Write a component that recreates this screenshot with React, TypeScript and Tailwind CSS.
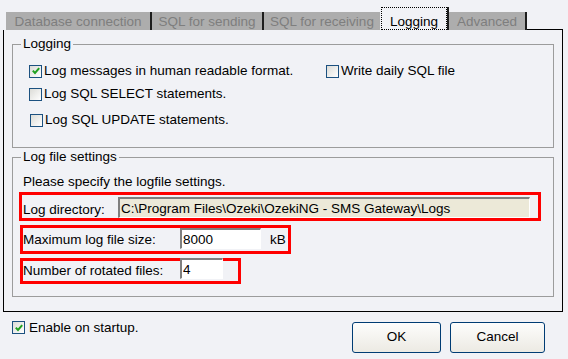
import React from "react";

function Check({ checked }: { checked?: boolean }) {
  return (
    <span className="flex h-[13px] w-[13px] shrink-0 items-center justify-center border border-[#1c5180] bg-linear-to-br from-[#dcdcd7] to-white">
      {checked && (
        <svg width="8" height="8" viewBox="0 0 8 8">
          <path d="M0.8 3.6 L3 6 L7.2 1.2" stroke="#21a121" strokeWidth="2" fill="none" />
        </svg>
      )}
    </span>
  );
}

function Tab({ label, width, edge = true }: { label: string; width: string; edge?: boolean }) {
  return (
    <div
      className={`flex h-[18px] ${width} justify-center bg-[#adadad] pt-[2px] leading-[16px] text-[#7e7e7e] ${
        edge ? "border-r-2 border-[#1e1e1e]" : ""
      }`}
    >
      {label}
    </div>
  );
}

const fieldCls =
  "border-t-2 border-l-2 border-r border-b border-t-[#7f7f7f] border-l-[#7f7f7f] border-r-white border-b-white pl-[1px] text-[13.5px] text-black outline-none";

export default function App() {
  return (
    <div className="h-[359px] w-[568px] overflow-hidden bg-[#f1f2f6] pt-[7px] font-['Liberation_Sans',Arial,sans-serif] text-[13.5px] text-black">
      {/* tabs */}
      <div className="ml-[3px] flex h-[23px] w-[560px] items-end pl-[3px]">
        <Tab label="Database connection" width="w-[146px]" />
        <Tab label="SQL for sending" width="w-[112px]" />
        <Tab label="SQL for receiving" width="w-[116px]" edge={false} />
        <div className="ml-[1px] h-[23px] w-[68px] border-r-2 border-[#1e1e1e]">
          <div className="flex h-full justify-center border border-dotted border-black pt-[6px] leading-[16px]">
            Logging
          </div>
        </div>
        <Tab label="Advanced" width="w-[78px]" />
        <div className="flex-1 self-stretch border-b border-black" />
      </div>

      {/* panel */}
      <div className="ml-[3px] w-[560px] border-x border-b border-black px-[8px] pt-[6px] pb-[14px]">
        <fieldset className="border border-[#9c9c9c] pb-[19px]">
          <legend className="ml-[8px] px-[2px] leading-[16px]">Logging</legend>
          <div className="mt-[11px] flex h-[16px] items-center pl-[16px]">
            <label className="flex w-[297px] items-center gap-[2px]">
              <Check checked />
              Log messages in human readable format.
            </label>
            <label className="flex items-center gap-[2px]">
              <Check />
              Write daily SQL file
            </label>
          </div>
          <div className="mt-[7px] flex h-[16px] items-center gap-[2px] pl-[16px]">
            <Check />
            Log SQL SELECT statements.
          </div>
          <div className="mt-[10px] flex h-[16px] items-center gap-[2px] pl-[17px]">
            <Check />
            Log SQL UPDATE statements.
          </div>
        </fieldset>

        <fieldset className="mt-[1px] border border-[#9c9c9c] pb-[12px]">
          <legend className="ml-[8px] px-[2px] leading-[16px]">Log file settings</legend>
          <div className="mt-[9px] pl-[10px] leading-[16px]">Please specify the logfile settings.</div>

          <div className="mt-[2px] ml-[6px] flex h-[29px] w-[522px] border-[3px] border-[#ff0000]">
            <span className="flex w-[96px] items-end pl-[1px] leading-[16px]">Log directory:</span>
            <input
              readOnly
              value={"C:\\Program Files\\Ozeki\\OzekiNG - SMS Gateway\\Logs"}
              className={`mt-[2px] h-[21px] w-[412px] bg-[#ece9d8] ${fieldCls}`}
            />
          </div>

          <div className="mt-[4px] ml-[7px] flex h-[29px] w-[271px] items-start border-[3px] border-[#ff0000]">
            <span className="w-[157px] self-center leading-[16px]">Maximum log file size:</span>
            <input readOnly value="8000" className={`h-[21px] w-[81px] bg-white ${fieldCls}`} />
            <span className="ml-[9px] self-center leading-[16px]">kB</span>
          </div>

          <div className="mt-[4px] ml-[7px] flex h-[26px] w-[221px] items-start border-[3px] border-[#ff0000]">
            <span className="w-[157px] self-center leading-[16px]">Number of rotated files:</span>
            <input readOnly value="4" className={`mt-[-3px] h-[21px] w-[43px] bg-white ${fieldCls}`} />
          </div>
        </fieldset>
      </div>

      {/* footer */}
      <div className="mt-[9px] flex items-start">
        <label className="ml-[12px] flex h-[13px] items-center gap-[4px] leading-[16px]">
          <Check checked />
          Enable on startup.
        </label>
        <div className="mt-[1px] mr-[23px] ml-auto flex gap-[9px]">
          <button className="h-[31px] w-[89px] rounded-[3px] border border-[#003c74] bg-linear-to-b from-[#fdfdfc] to-[#eceae3]">
            OK
          </button>
          <button className="h-[31px] w-[95px] rounded-[3px] border border-[#003c74] bg-linear-to-b from-[#fdfdfc] to-[#eceae3]">
            Cancel
          </button>
        </div>
      </div>
    </div>
  );
}
